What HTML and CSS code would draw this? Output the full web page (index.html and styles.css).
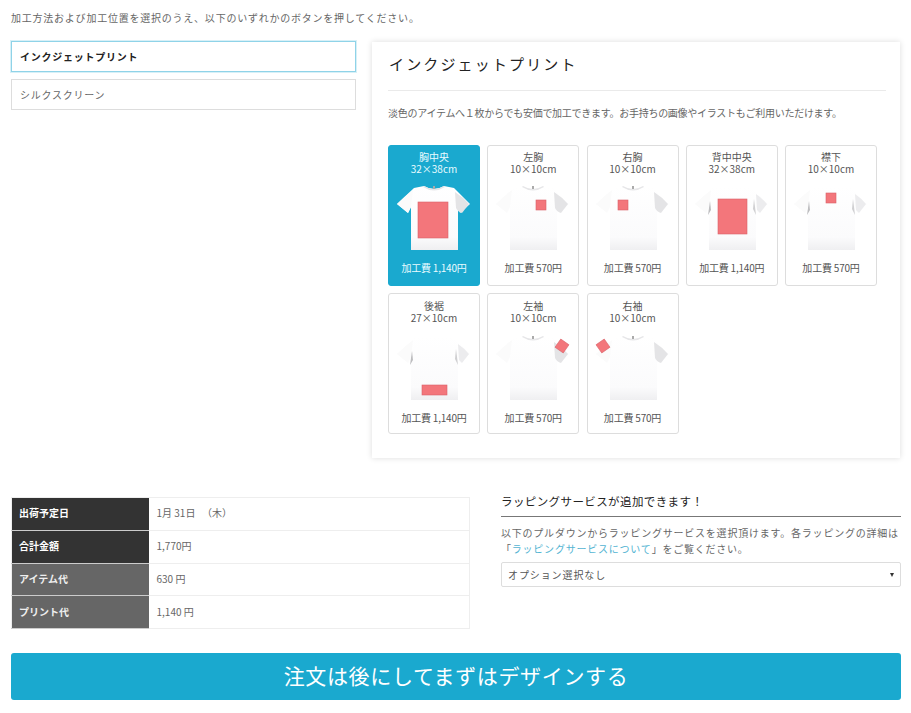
FILE: index.html
```html
<!DOCTYPE html>
<html lang="ja">
<head>
<meta charset="utf-8">
<title>加工方法</title>
<link rel="stylesheet" href="styles.css">
</head>
<body>
<svg class="defs" aria-hidden="true">
  <defs>
    <linearGradient id="fade" x1="0" y1="0" x2="0" y2="1">
      <stop offset="0" stop-color="#ffffff"/>
      <stop offset="0.8" stop-color="#fbfbfc"/>
      <stop offset="1" stop-color="#efeff1"/>
    </linearGradient>
    <symbol id="front" viewBox="0 0 92 66">
      <path d="M36 1 26 3 9 19l11 9 3-6v43h47V22l2 6 10-9L66 3 56 1q-10 6-20 0Z" fill="url(#fade)"/>
      <path d="M67 7Q75 12 81 19L74 28Q70 27 68 23Z" fill="#e4e4e6"/>
      <path d="M25 5Q16 12 9 19L20 28 23 22Z" fill="#fbfbfb"/>
      <path d="M36 1q10 6 20 0l1 1q-11 7-22 0Z" fill="#e6e6e8"/>
      <rect x="45" y="1" width="2" height="3" fill="#aaa"/>
    </symbol>
    <symbol id="back" viewBox="0 0 92 66">
      <path d="M36 1 26 3 9 19l11 9 3-6v43h47V22l2 6 10-9L66 3 56 1q-10 2-20 0Z" fill="url(#fade)"/>
      <path d="M70 9Q76 13 81 19L74 28 71 25Z" fill="#ececee"/>
      <path d="M25 5Q16 12 9 19L20 28 23 22Z" fill="#fbfbfb"/>
      <path d="M24 16 25 25 22 30Z" fill="#bdbdbf"/>
      <path d="M68 14 67 24 70 30Z" fill="#cfcfd1"/>
    </symbol>
  </defs>
</svg>

<p class="lead">加工方法および加工位置を選択のうえ、以下のいずれかのボタンを押してください。</p>

<div class="main">
  <div class="tabs">
    <div class="tab tab-active">インクジェットプリント</div>
    <div class="tab">シルクスクリーン</div>
  </div>

  <section class="panel">
    <h2 class="panel-title">インクジェットプリント</h2>
    <p class="panel-text">淡色のアイテムへ１枚からでも安価で加工できます。お手持ちの画像やイラストもご利用いただけます。</p>
    <div class="cards">
      <div class="card card-on">
        <div class="pos">胸中央<br>32×38cm</div>
        <svg class="shirt" viewBox="0 0 92 66"><use href="#front"/><rect class="mark" x="30" y="17" width="30" height="36"/></svg>
        <div class="fee">加工費 1,140円</div>
      </div>
      <div class="card">
        <div class="pos">左胸<br>10×10cm</div>
        <svg class="shirt" viewBox="0 0 92 66"><use href="#front"/><rect class="mark" x="49" y="15" width="10" height="10"/></svg>
        <div class="fee">加工費 570円</div>
      </div>
      <div class="card">
        <div class="pos">右胸<br>10×10cm</div>
        <svg class="shirt" viewBox="0 0 92 66"><use href="#front"/><rect class="mark" x="31" y="15" width="10" height="10"/></svg>
        <div class="fee">加工費 570円</div>
      </div>
      <div class="card">
        <div class="pos">背中中央<br>32×38cm</div>
        <svg class="shirt" viewBox="0 0 92 66"><use href="#back"/><rect class="mark" x="32" y="14" width="29" height="35"/></svg>
        <div class="fee">加工費 1,140円</div>
      </div>
      <div class="card">
        <div class="pos">襟下<br>10×10cm</div>
        <svg class="shirt" viewBox="0 0 92 66"><use href="#back"/><rect class="mark" x="41" y="8" width="10" height="10"/></svg>
        <div class="fee">加工費 570円</div>
      </div>
      <div class="card">
        <div class="pos">後裾<br>27×10cm</div>
        <svg class="shirt" viewBox="0 0 92 66"><use href="#back"/><rect class="mark" x="34" y="50" width="25" height="10"/></svg>
        <div class="fee">加工費 1,140円</div>
      </div>
      <div class="card">
        <div class="pos">左袖<br>10×10cm</div>
        <svg class="shirt" viewBox="0 0 92 66"><use href="#front"/><rect class="mark" x="70" y="6" width="10" height="10" transform="rotate(35 75 11)"/></svg>
        <div class="fee">加工費 570円</div>
      </div>
      <div class="card">
        <div class="pos">右袖<br>10×10cm</div>
        <svg class="shirt" viewBox="0 0 92 66"><use href="#front"/><rect class="mark" x="11" y="6" width="10" height="10" transform="rotate(-35 16 11)"/></svg>
        <div class="fee">加工費 570円</div>
      </div>
    </div>
  </section>
</div>

<div class="lower">
  <table class="summary">
    <tr><th>出荷予定日</th><td>1月 31日 &nbsp;&nbsp;（木）</td></tr>
    <tr><th>合計金額</th><td>1,770円</td></tr>
    <tr class="sub"><th>アイテム代</th><td>630 円</td></tr>
    <tr class="sub"><th>プリント代</th><td>1,140 円</td></tr>
  </table>

  <div class="wrap">
    <h3 class="wrap-title">ラッピングサービスが追加できます！</h3>
    <p class="wrap-text">以下のプルダウンからラッピングサービスを選択頂けます。各ラッピングの詳細は<br>「<a class="wrap-link" href="#">ラッピングサービスについて</a>」をご覧ください。</p>
    <div class="select"><span>オプション選択なし</span><span class="arrow"></span></div>
  </div>
</div>

<button class="cta" type="button">注文は後にしてまずはデザインする</button>
</body>
</html>
```

FILE: styles.css
```css
* { box-sizing: border-box; }
html, body { margin: 0; background: #fff; }
body {
  padding: 0 10px 0 11px;
  font-family: "Noto Sans CJK JP", "Noto Sans", sans-serif;
  font-size: 10px;
  color: #555;
  overflow: hidden;
}
.defs { width: 0; height: 0; display: block; }
.lead {
  margin: 0;
  height: 41px;
  padding-top: 10px;
  line-height: 15px;
  letter-spacing: 0.77px;
  color: #666;
}
.main {
  display: grid;
  grid-template-columns: 345px 528px;
  column-gap: 16px;
  align-items: start;
}
.tabs { display: flex; flex-direction: column; gap: 7px; }
.tab {
  height: 31px;
  border: 1px solid #ddd;
  padding-left: 8px;
  line-height: 29px;
  letter-spacing: 0.75px;
  color: #666;
}
.tab-active {
  border-color: #8fd3e8;
  box-shadow: 0 0 0 1px rgba(143, 211, 232, 0.35);
  color: #222;
  font-weight: 700;
}
.panel {
  margin-top: 1px;
  height: 416px;
  padding: 0 14px 0 16px;
  background: #fff;
  box-shadow: 0 0 6px rgba(0, 0, 0, 0.14);
}
.panel-title {
  margin: 0;
  height: 49px;
  padding-top: 10px;
  border-bottom: 1px solid #eaeaea;
  font-size: 15px;
  font-weight: 400;
  line-height: 24px;
  letter-spacing: 2.15px;
  color: #222;
  padding-left: 1px;
}
.panel-text {
  margin: 0;
  height: 54px;
  padding-top: 14px;
  line-height: 15px;
  letter-spacing: -0.27px;
  color: #666;
}
.cards {
  display: grid;
  grid-template-columns: repeat(5, 92px);
  column-gap: 7.25px;
  row-gap: 7px;
}
.card {
  height: 141px;
  border: 1px solid #ddd;
  border-radius: 3px;
  background: #fff;
  text-align: center;
  color: #555;
  display: flex;
  flex-direction: column;
  align-items: center;
  padding-top: 5px;
}
.card:nth-child(n+6) { padding-top: 6px; }
.card-on { background: #1aa9cf; border-color: #1aa9cf; color: #e8fbff; }
.pos { height: 34px; line-height: 12px; }
.card:nth-child(n+6) .pos { height: 35px; }
.shirt { display: block; width: 92px; height: 66px; flex: none; margin: 0 -1px; }
.mark { fill: #f3767b; stroke: #d9626a; stroke-width: 0.6; }
.fee { margin-top: 9px; line-height: 15px; letter-spacing: -0.2px; }

.lower {
  margin-top: 39px;
  display: grid;
  grid-template-columns: 460px 400px;
  column-gap: 30px;
  align-items: start;
}
.summary {
  width: 459px;
  height: 132px;
  border-collapse: collapse;
  border: 1px solid #eee;
  table-layout: fixed;
}
.summary tr { height: 32.75px; }
.summary th {
  width: 137px;
  background: #333;
  color: #fff;
  font-weight: 700;
  text-align: left;
  padding: 0 0 2px 7px;
  border-bottom: 1px solid #ccc;
}
.summary .sub th { background: #666; color: #eee; }
.summary td {
  padding: 0 0 2px 8px;
  border-bottom: 1px solid #eee;
  color: #666;
}
.wrap { margin-top: -4px; }
.wrap-title {
  margin: 0;
  height: 24px;
  font-size: 11.5px;
  font-weight: 400;
  line-height: 17px;
  letter-spacing: 0.4px;
  color: #222;
  border-bottom: 1px solid #777;
}
.wrap-text {
  margin: 0;
  padding-top: 8px;
  line-height: 16px;
  letter-spacing: 0.78px;
  color: #666;
  height: 45px;
}
.wrap-link { color: #53b4d2; text-decoration: none; }
.select {
  width: 400px;
  height: 25px;
  border: 1px solid #ddd;
  border-radius: 2px;
  display: flex;
  align-items: center;
  justify-content: space-between;
  padding: 0 6px;
  letter-spacing: 0.9px;
  color: #555;
}
.arrow {
  width: 0;
  height: 0;
  border-left: 2px solid transparent;
  border-right: 2px solid transparent;
  border-top: 4px solid #333;
}
.cta {
  display: block;
  width: 890px;
  height: 47px;
  margin-top: 24px;
  padding: 0 0 4px;
  border: 0;
  border-radius: 3px;
  background: #1aa9cf;
  color: #fff;
  font-family: "Noto Sans CJK JP", "Noto Sans", sans-serif;
  font-size: 21px;
  letter-spacing: 0.65px;
}
```
